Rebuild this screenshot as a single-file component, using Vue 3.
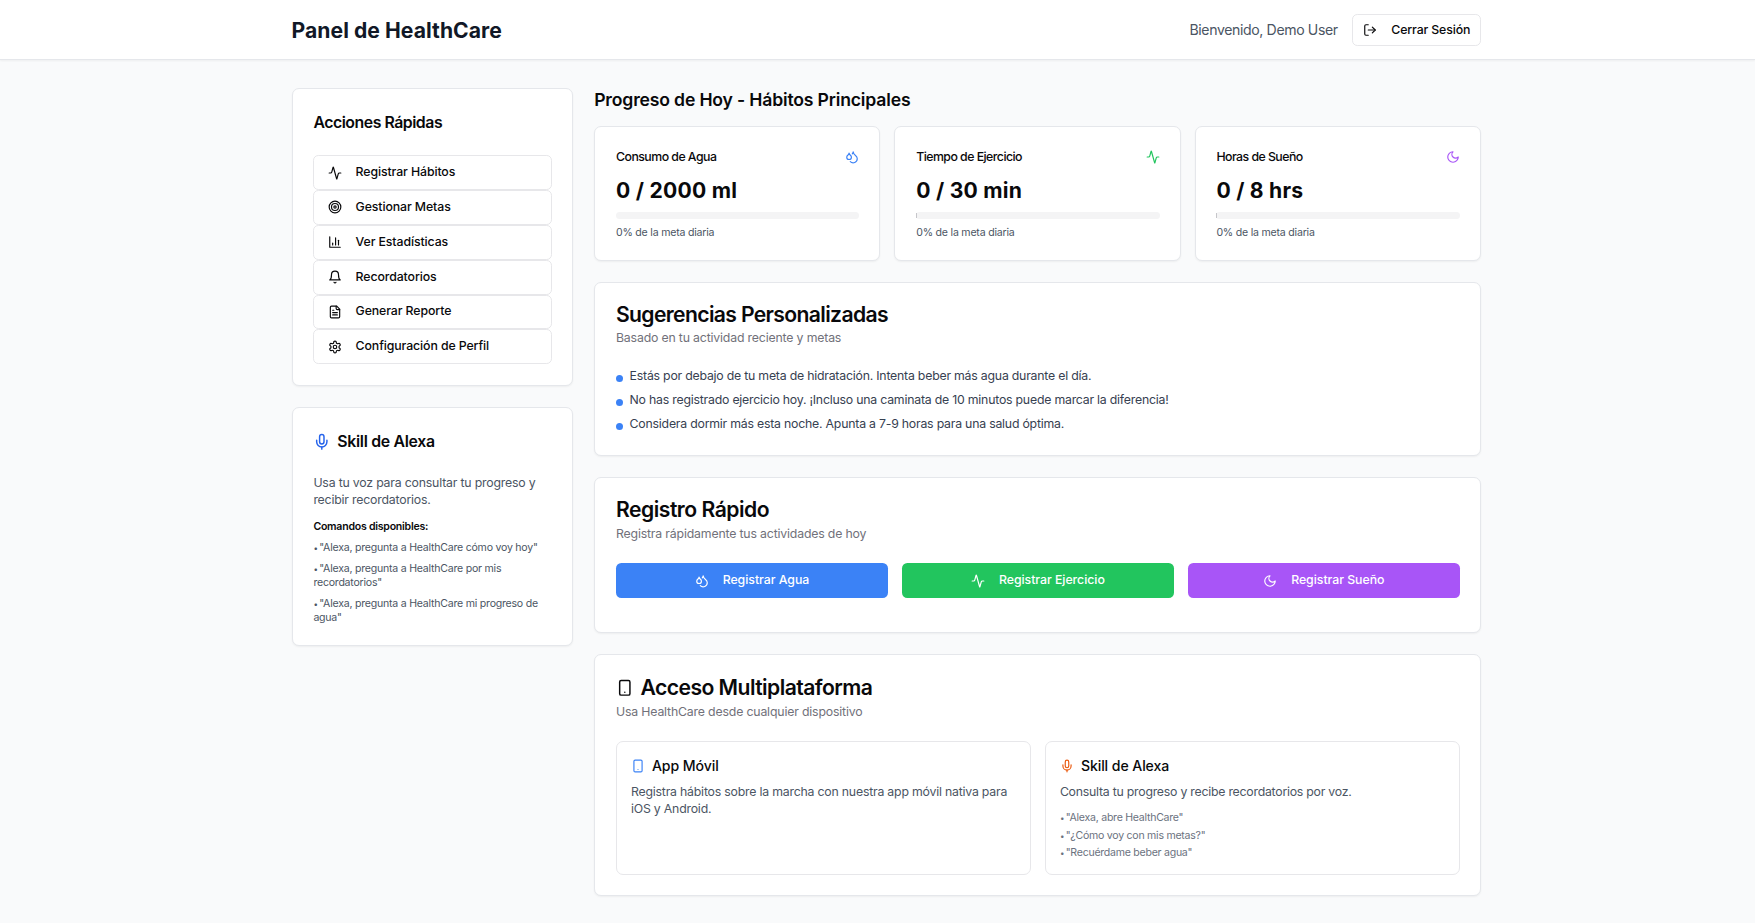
<script setup>
import { h } from 'vue'

const shapes = {
  activity: ['M22 12h-2.48a2 2 0 0 0-1.93 1.46l-2.35 8.36a.25.25 0 0 1-.48 0L9.24 2.18a.25.25 0 0 0-.48 0l-2.35 8.36A2 2 0 0 1 4.49 12H2'],
  target: ['M12 2a10 10 0 1 0 0 20a10 10 0 1 0 0-20', 'M12 6a6 6 0 1 0 0 12a6 6 0 1 0 0-12', 'M12 10a2 2 0 1 0 0 4a2 2 0 1 0 0-4'],
  chart: ['M3 3v18h18', 'M18 17V9', 'M13 17V5', 'M8 17v-3'],
  bell: ['M6 8a6 6 0 0 1 12 0c0 7 3 9 3 9H3s3-2 3-9', 'M10.3 21a1.94 1.94 0 0 0 3.4 0'],
  file: ['M15 2H6a2 2 0 0 0-2 2v16a2 2 0 0 0 2 2h12a2 2 0 0 0 2-2V7Z', 'M14 2v4a2 2 0 0 0 2 2h4', 'M10 9H8', 'M16 13H8', 'M16 17H8'],
  settings: ['M12.22 2h-.44a2 2 0 0 0-2 2v.18a2 2 0 0 1-1 1.73l-.43.25a2 2 0 0 1-2 0l-.15-.08a2 2 0 0 0-2.73.73l-.22.38a2 2 0 0 0 .73 2.73l.15.1a2 2 0 0 1 1 1.72v.51a2 2 0 0 1-1 1.74l-.15.09a2 2 0 0 0-.73 2.73l.22.38a2 2 0 0 0 2.73.73l.15-.08a2 2 0 0 1 2 0l.43.25a2 2 0 0 1 1 1.73V20a2 2 0 0 0 2 2h.44a2 2 0 0 0 2-2v-.18a2 2 0 0 1 1-1.73l.43-.25a2 2 0 0 1 2 0l.15.08a2 2 0 0 0 2.73-.73l.22-.39a2 2 0 0 0-.73-2.73l-.15-.08a2 2 0 0 1-1-1.74v-.5a2 2 0 0 1 1-1.74l.15-.09a2 2 0 0 0 .73-2.73l-.22-.38a2 2 0 0 0-2.73-.73l-.15.08a2 2 0 0 1-2 0l-.43-.25a2 2 0 0 1-1-1.73V4a2 2 0 0 0-2-2z', 'M12 9a3 3 0 1 0 0 6a3 3 0 1 0 0-6'],
  mic: ['M12 2a3 3 0 0 0-3 3v7a3 3 0 0 0 6 0V5a3 3 0 0 0-3-3Z', 'M19 10v2a7 7 0 0 1-14 0v-2', 'M12 19v3'],
  phone: ['M7 2h10a2 2 0 0 1 2 2v16a2 2 0 0 1-2 2H7a2 2 0 0 1-2-2V4a2 2 0 0 1 2-2Z', 'M12 18h.01'],
  logout: ['M9 21H5a2 2 0 0 1-2-2V5a2 2 0 0 1 2-2h4', 'M16 17l5-5-5-5', 'M21 12H9'],
  drops: ['M7 16.3c2.2 0 4-1.83 4-4.05 0-1.16-.57-2.26-1.71-3.19S7.29 6.75 7 5.3c-.29 1.45-1.14 2.84-2.29 3.76S3 11.1 3 12.25c0 2.22 1.8 4.05 4 4.05z', 'M12.56 6.6A10.97 10.97 0 0 0 14 3.02c.5 2.5 2 4.9 4 6.5s3 3.5 3 5.5a6.98 6.98 0 0 1-11.91 4.97'],
  moon: ['M12 3a6 6 0 0 0 9 9 9 9 0 1 1-9-9Z']
}

const Icon = (props) =>
  h('svg', { class: 'icon', viewBox: '0 0 24 24', fill: 'none', stroke: 'currentColor', 'stroke-width': 2, 'stroke-linecap': 'round', 'stroke-linejoin': 'round' },
    shapes[props.name].map((d) => h('path', { d })))
Icon.props = ['name']

const actions = [
  { icon: 'activity', label: 'Registrar Hábitos' },
  { icon: 'target', label: 'Gestionar Metas' },
  { icon: 'chart', label: 'Ver Estadísticas' },
  { icon: 'bell', label: 'Recordatorios' },
  { icon: 'file', label: 'Generar Reporte' },
  { icon: 'settings', label: 'Configuración de Perfil' }
]
const commands = [
  '"Alexa, pregunta a HealthCare cómo voy hoy"',
  '"Alexa, pregunta a HealthCare por mis recordatorios"',
  '"Alexa, pregunta a HealthCare mi progreso de agua"'
]
const stats = [
  { label: 'Consumo de Agua', value: '0 / 2000 ml', icon: 'drops', tone: 'blue' },
  { label: 'Tiempo de Ejercicio', value: '0 / 30 min', icon: 'activity', tone: 'green' },
  { label: 'Horas de Sueño', value: '0 / 8 hrs', icon: 'moon', tone: 'purple' }
]
const tips = [
  'Estás por debajo de tu meta de hidratación. Intenta beber más agua durante el día.',
  'No has registrado ejercicio hoy. ¡Incluso una caminata de 10 minutos puede marcar la diferencia!',
  'Considera dormir más esta noche. Apunta a 7-9 horas para una salud óptima.'
]
const quick = [
  { label: 'Registrar Agua', icon: 'drops', tone: 'blue' },
  { label: 'Registrar Ejercicio', icon: 'activity', tone: 'green' },
  { label: 'Registrar Sueño', icon: 'moon', tone: 'purple' }
]
const phrases = ['"Alexa, abre HealthCare"', '"¿Cómo voy con mis metas?"', '"Recuérdame beber agua"']
</script>

<template>
  <div class="page">
    <header class="topbar">
      <div class="wrap topbar-inner">
        <h1>Panel de HealthCare</h1>
        <div class="user">
          <span class="welcome">Bienvenido, Demo User</span>
          <button class="logout"><Icon name="logout" /><span>Cerrar Sesión</span></button>
        </div>
      </div>
    </header>

    <div class="wrap columns">
      <aside class="side">
        <section class="card actions">
          <h3>Acciones Rápidas</h3>
          <div class="action-list">
            <button v-for="a in actions" :key="a.label" class="action"><Icon :name="a.icon" /><span>{{ a.label }}</span></button>
          </div>
        </section>
        <section class="card alexa">
          <h3><Icon name="mic" /><span>Skill de Alexa</span></h3>
          <p class="lead">Usa tu voz para consultar tu progreso y recibir recordatorios.</p>
          <p class="cmd-title">Comandos disponibles:</p>
          <ul class="cmds">
            <li v-for="c in commands" :key="c"><b>•</b> {{ c }}</li>
          </ul>
        </section>
      </aside>

      <main class="content">
        <h2 class="heading">Progreso de Hoy - Hábitos Principales</h2>
        <div class="stats">
          <section v-for="s in stats" :key="s.label" class="card stat">
            <div class="stat-head"><span>{{ s.label }}</span><Icon :name="s.icon" :class="s.tone" /></div>
            <div class="value">{{ s.value }}</div>
            <div class="bar"></div>
            <p class="pct">0% de la meta diaria</p>
          </section>
        </div>

        <section class="card tips">
          <h2 class="title">Sugerencias Personalizadas</h2>
          <p class="desc">Basado en tu actividad reciente y metas</p>
          <ul class="tip-list">
            <li v-for="t in tips" :key="t"><i></i><span>{{ t }}</span></li>
          </ul>
        </section>

        <section class="card quick">
          <h2 class="title">Registro Rápido</h2>
          <p class="desc">Registra rápidamente tus actividades de hoy</p>
          <div class="quick-row">
            <button v-for="q in quick" :key="q.label" :class="['log', q.tone]"><Icon :name="q.icon" /><span>{{ q.label }}</span></button>
          </div>
        </section>

        <section class="card multi">
          <h2 class="title"><Icon name="phone" /><span>Acceso Multiplataforma</span></h2>
          <p class="desc">Usa HealthCare desde cualquier dispositivo</p>
          <div class="platforms">
            <div class="platform">
              <h4><Icon name="phone" class="blue" /><span>App Móvil</span></h4>
              <p>Registra hábitos sobre la marcha con nuestra app móvil nativa para iOS y Android.</p>
            </div>
            <div class="platform">
              <h4><Icon name="mic" class="orange" /><span>Skill de Alexa</span></h4>
              <p>Consulta tu progreso y recibe recordatorios por voz.</p>
              <ul>
                <li v-for="p in phrases" :key="p"><b>•</b> {{ p }}</li>
              </ul>
            </div>
          </div>
        </section>
      </main>
    </div>
  </div>
</template>

<style>
body { background: #f9fafb; }
</style>

<style scoped>
* { box-sizing: border-box; margin: 0; padding: 0; }
.page { min-height: 923px; background: #f9fafb; color: #09090b; font-family: Inter, "Liberation Sans", sans-serif; }
.wrap { width: 1189.2px; margin-left: 291.6px; }
ul { list-style: none; }
li b { font-size: 8px; line-height: 1px; font-weight: 400; letter-spacing: -1.4px; }
button { font-family: inherit; color: inherit; background: #fff; border: 1px solid #e7e7ea; border-radius: 5.3px; font-size: 12.32px; font-weight: 500; }
.icon { width: 14px; height: 14px; flex: none; display: block; }

.topbar { height: 60px; background: #fff; border-bottom: 1px solid #e5e7eb; box-shadow: 0 1px 2px rgba(0, 0, 0, .05); }
.topbar-inner { height: 59px; display: flex; align-items: center; justify-content: space-between; }
h1 { font-size: 21.12px; line-height: 28px; font-weight: 700; color: #111827; letter-spacing: .05px; padding-top: 2px; }
.user { display: flex; align-items: center; gap: 14px; }
.welcome { font-size: 14.08px; line-height: 20px; color: #4b5563; letter-spacing: -.37px; }
.logout { width: 129px; height: 32px; display: flex; align-items: center; padding-left: 10.5px; gap: 14px; white-space: nowrap; letter-spacing: -.13px; }

.columns { display: grid; grid-template-columns: 281.4px 1fr; column-gap: 21.2px; padding-top: 28px; align-items: start; }
.side, .content { display: flex; flex-direction: column; gap: 21px; }
.card { background: #fff; border: 1px solid #e5e7eb; border-radius: 7px; box-shadow: 0 1px 2px rgba(0, 0, 0, .05); padding: 0 20px 0 20.8px; }

h3 { font-size: 15.84px; line-height: 22px; font-weight: 600; display: flex; align-items: center; gap: 7px; letter-spacing: -.47px; }
h3 .icon { width: 17.6px; height: 17.6px; margin-left: -.7px; color: #2563eb; }
.actions { height: 298px; padding-top: 23px; }
.action-list { margin-top: 21.2px; }
.action { display: flex; align-items: center; width: 100%; height: 34.85px; padding: 0 13.2px; gap: 14px; text-align: left; letter-spacing: -.1px; }
.action span { position: relative; top: -1px; }

.alexa { height: 238.5px; padding-top: 23px; }
.alexa h3 { letter-spacing: -.3px; }
.lead { margin-top: 20.5px; font-size: 12.32px; line-height: 17.4px; color: #4b5563; letter-spacing: -.2px; }
.cmd-title { margin-top: 11.3px; font-size: 10.56px; line-height: 14px; font-weight: 600; letter-spacing: -.24px; }
.cmds { margin-top: 7.7px; font-size: 10.56px; line-height: 13.9px; color: #4b5563; letter-spacing: -.22px; }
.cmds li + li { margin-top: 6.9px; }

.heading { font-size: 17.6px; line-height: 24px; font-weight: 600; margin-bottom: -7px; letter-spacing: -.17px; }
.stats { display: grid; grid-template-columns: repeat(3, 1fr); gap: 14px; }
.stat { height: 135px; padding-top: 20px; }
.stat-head { display: flex; justify-content: space-between; align-items: center; font-size: 12.32px; line-height: 20px; font-weight: 500; letter-spacing: -.53px; }
.value { margin-top: 10px; font-size: 21.12px; line-height: 28px; font-weight: 700; letter-spacing: .26px; }
.bar { margin-top: 7px; height: 7px; border-radius: 4px; background: #f4f4f5; }
.stat + .stat .bar::before { content: ""; display: block; width: 1px; height: 5px; background: #c6c6ca; transform: translateY(1px); }
.pct { margin-top: 7px; font-size: 10.56px; line-height: 14px; color: #4b5563; letter-spacing: -.2px; }

.title { font-size: 21.12px; line-height: 24px; font-weight: 600; display: flex; align-items: center; gap: 7px; letter-spacing: -.55px; }
.title .icon { width: 17.6px; height: 17.6px; }
.desc { margin-top: 3px; font-size: 12.32px; line-height: 18px; color: #71717a; letter-spacing: -.18px; }
.tips { height: 174px; padding-top: 19.5px; }
.tips .title { letter-spacing: -.63px; }
.tips .desc { margin-top: 2.5px; }
.tip-list { margin-top: 17px; font-size: 12.32px; line-height: 24.1px; color: #374151; letter-spacing: -.225px; }
.tip-list li { display: flex; align-items: center; gap: 6.6px; }
.tip-list i { width: 7px; height: 7px; border-radius: 50%; background: #3b82f6; position: relative; top: 2px; }

.quick { height: 156px; padding-top: 20px; }
.quick .title { letter-spacing: -.48px; }
.quick-row { display: grid; grid-template-columns: repeat(3, 1fr); gap: 14px; margin-top: 19.5px; }
.log { height: 35.5px; border: 0; color: #fff; display: flex; align-items: center; justify-content: center; gap: 14px; padding-bottom: 1.5px; letter-spacing: -.03px; }
.log .icon { position: relative; top: 1.5px; }
.log.blue { background: #3b82f6; }
.log.green { background: #22c55e; }
.log.purple { background: #a855f7; }

.multi { height: 242px; padding-top: 20.5px; }
.platforms { display: grid; grid-template-columns: 1fr 1fr; gap: 14px; margin-top: 20.5px; }
.platform { height: 134px; border: 1px solid #e7e7ea; border-radius: 7px; padding: 14px 12px 0 14px; }
h4 { font-size: 14.08px; line-height: 20px; font-weight: 500; display: flex; align-items: center; gap: 7px; letter-spacing: -.08px; }
.platform p { margin-top: 6.5px; font-size: 12.32px; line-height: 17.6px; color: #4b5563; letter-spacing: -.215px; }
.platform p:not(:last-child) { letter-spacing: -.245px; }
.platform ul { margin-top: 9.2px; font-size: 10.56px; line-height: 17.6px; color: #6b7280; letter-spacing: -.25px; }

.icon.blue { color: #3b82f6; }
.icon.green { color: #22c55e; }
.icon.purple { color: #a855f7; }
.icon.orange { color: #ea580c; }
</style>
